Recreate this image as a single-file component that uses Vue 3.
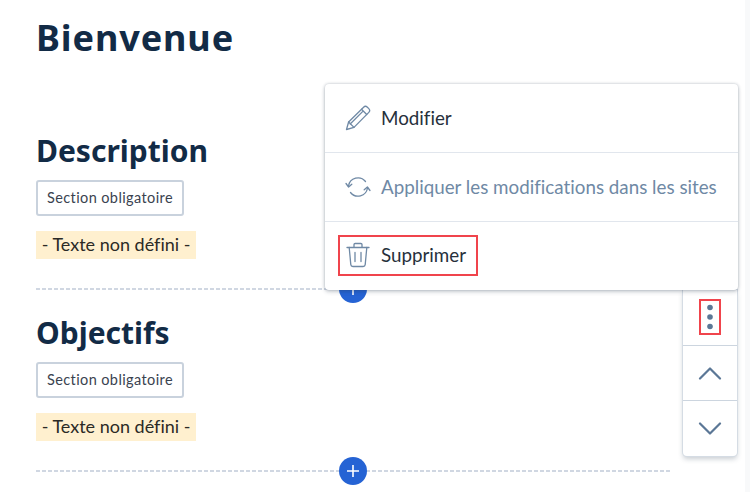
<template>
  <div class="page">
    <main class="content">
      <h1 class="title">Bienvenue</h1>
      <section v-for="s in sections" :key="s" class="section">
        <h2 class="heading">{{ s }}</h2>
        <span class="tag">Section obligatoire</span>
        <div><span class="undefined">- Texte non défini -</span></div>
        <div class="divider">
          <span class="add">
            <svg width="14" height="14" viewBox="0 0 14 14"><path d="M7 1v12M1 7h12" stroke="#fff" stroke-width="1.6" fill="none" /></svg>
          </span>
        </div>
      </section>
    </main>
    <aside class="rail"></aside>

    <div class="toolbar">
      <button class="tool">
        <span class="dots-box">
          <svg width="8" height="28" viewBox="0 0 8 28"><circle cx="4" cy="4.5" r="2.8" fill="#5b7796" /><circle cx="4" cy="14" r="2.8" fill="#5b7796" /><circle cx="4" cy="23.5" r="2.8" fill="#5b7796" /></svg>
        </span>
      </button>
      <button class="tool">
        <svg width="24" height="14" viewBox="0 0 24 14"><path d="M2 12.5 12 2.5l10 10" stroke="#5b7796" stroke-width="2.2" fill="none" stroke-linecap="round" stroke-linejoin="round" /></svg>
      </button>
      <button class="tool">
        <svg width="24" height="14" viewBox="0 0 24 14"><path d="M2 1.5l10 10 10-10" stroke="#5b7796" stroke-width="2.2" fill="none" stroke-linecap="round" stroke-linejoin="round" /></svg>
      </button>
    </div>

    <div class="menu">
      <div class="item">
        <svg class="icon" width="26" height="26" viewBox="0 0 26 26" fill="none" stroke="#6f89a5" stroke-width="1.3" stroke-linejoin="round" stroke-linecap="round">
          <path d="M1.5 24.5 3.6 17 18.6 2.2c1-1 2.7-1 3.8 0l1.4 1.4c1 1.1 1 2.8 0 3.8L9 22.4z" />
          <path d="M3.6 17 9 22.4M16.5 4.3l5.2 5.2M5.2 19l12.6-12.6" />
        </svg>
        <span class="label">Modifier</span>
      </div>
      <div class="item muted">
        <svg class="icon" width="26" height="26" viewBox="0 0 26 26" fill="none" stroke="#6f89a5" stroke-width="1.3" stroke-linejoin="round" stroke-linecap="round">
          <path d="M3.5 12A9.6 9.6 0 0 1 20.5 7.5" />
          <path d="M22.5 14a9.6 9.6 0 0 1-17 4.5" />
          <path d="M1 9.5 3.6 13l3.2-2.8M25 16.5 22.4 13l-3.2 2.8" />
        </svg>
        <span class="label">Appliquer les modifications dans les sites</span>
      </div>
      <div class="item">
        <div class="highlight">
          <svg class="icon" width="24" height="26" viewBox="0 0 24 26" fill="none" stroke="#6f89a5" stroke-width="1.3" stroke-linejoin="round" stroke-linecap="round">
            <path d="M1 5.5h22M8 5.5V2.6c0-.6.5-1.1 1.1-1.1h5.8c.6 0 1.1.5 1.1 1.1v2.9" />
            <path d="M3.2 5.5 4.8 22.6c.1 1.1 1 1.9 2.1 1.9h10.2c1.1 0 2-.8 2.1-1.9L20.8 5.5" />
            <path d="M9 10.5v9M15 10.5v9" />
          </svg>
          <span class="label">Supprimer</span>
        </div>
      </div>
    </div>
  </div>
</template>

<script setup>
const sections = ['Description', 'Objectifs']
</script>

<style>
html, body { margin: 0; background: #fff; overflow: hidden; }
</style>

<style scoped>
.page {
  position: relative;
  width: 750px;
  height: 492px;
  display: flex;
  overflow: hidden;
  background: #fff;
  font-family: "Lato", "Noto Sans", sans-serif;
  font-variant-ligatures: none;
}
.content {
  width: 634px;
  padding-left: 36px;
  flex: none;
}
.title {
  margin: 0;
  padding-top: 14px;
  height: 118px;
  box-sizing: border-box;
  font-family: "Noto Sans", sans-serif;
  font-size: 36px;
  line-height: 48px;
  font-weight: 700;
  letter-spacing: 0.9px;
  color: #122b46;
}
.section { height: 182px; }
.heading {
  margin: 0;
  padding-top: 13px;
  height: 62px;
  box-sizing: border-box;
  font-family: "Noto Sans", sans-serif;
  font-size: 30px;
  line-height: 40px;
  font-weight: 700;
  color: #122b46;
}
.tag {
  display: inline-block;
  box-sizing: border-box;
  width: 148px;
  height: 36px;
  border: 2px solid #c9d2dd;
  border-radius: 3px;
  font-size: 14.5px;
  letter-spacing: 0.4px;
  line-height: 32px;
  text-align: center;
  color: #3a4350;
  vertical-align: top;
}
.undefined {
  display: inline-block;
  margin-top: 15px;
  height: 28px;
  width: 160px;
  box-sizing: border-box;
  background: #fff0cf;
  font-size: 18px;
  line-height: 27px;
  text-align: center;
  color: #2b2a26;
}
.divider {
  position: relative;
  margin-top: 29px;
  height: 2px;
  background: repeating-linear-gradient(90deg, #d0d7e2 0 4px, transparent 4px 6px);
}
.add {
  position: absolute;
  left: 303px;
  top: -13px;
  width: 28px;
  height: 28px;
  border-radius: 50%;
  background: #2563d4;
  display: flex;
  align-items: center;
  justify-content: center;
}
.rail {
  margin-left: 75px;
  flex: 1;
  background: #f8f9fa;
}
.toolbar {
  position: absolute;
  left: 683px;
  top: 290px;
  width: 54px;
  height: 166px;
  background: #fff;
  border-radius: 0 0 4px 4px;
  box-shadow: 0 0 0 1px #d5dce4, 0 3px 5px rgba(40, 60, 80, 0.25);
  display: flex;
  flex-direction: column;
}
.tool {
  flex: 1;
  border: 0;
  padding: 0;
  background: none;
  display: flex;
  align-items: center;
  justify-content: center;
}
.tool + .tool { border-top: 1px solid #ccd5df; }
.dots-box {
  box-sizing: border-box;
  width: 22px;
  height: 36px;
  border: 2px solid #f0444c;
  display: flex;
  align-items: center;
  justify-content: center;
}
.menu {
  position: absolute;
  left: 325px;
  top: 84px;
  width: 413px;
  height: 206px;
  background: #fff;
  border-radius: 4px;
  box-shadow: 0 0 3px rgba(40, 60, 80, 0.3), 0 2px 4px rgba(40, 60, 80, 0.22);
  display: flex;
  flex-direction: column;
}
.item {
  flex: 1;
  display: flex;
  align-items: center;
  gap: 10px;
  padding-left: 20px;
  font-size: 18.8px;
  color: #26303b;
}
.item + .item { border-top: 1px solid #e1e6ed; }
.label { padding-bottom: 2px; }
.muted { color: #6f89a5; }
.icon { flex: none; }
.highlight {
  display: flex;
  align-items: center;
  gap: 11px;
  box-sizing: border-box;
  width: 140px;
  height: 41px;
  margin-left: -7px;
  margin-top: -2px;
  padding-left: 6px;
  border: 2px solid #f0444c;
}
</style>
